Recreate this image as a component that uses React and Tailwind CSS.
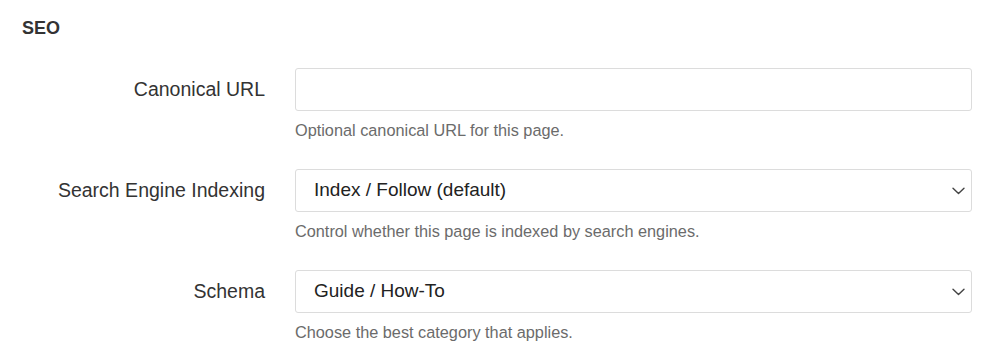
import React from 'react';

const fields = [
  { label: 'Canonical URL', type: 'input', help: 'Optional canonical URL for this page.' },
  { label: 'Search Engine Indexing', type: 'select', value: 'Index / Follow (default)', help: 'Control whether this page is indexed by search engines.' },
  { label: 'Schema', type: 'select', value: 'Guide / How-To', help: 'Choose the best category that applies.' },
];

const Chevron = () => (
  <svg width="13" height="8" viewBox="0 0 13 8" fill="none" className="text-[#444]">
    <polyline points="1,1.2 6.5,6.6 12,1.2" stroke="currentColor" strokeWidth="1.4" strokeLinecap="round" strokeLinejoin="round" />
  </svg>
);

const App = () => {
  return (
    <div className="w-[1000px] h-[360px] bg-white overflow-hidden font-['Liberation_Sans',Arial,sans-serif]">
      <div className="pl-[22px] pt-[17px] text-[18px] font-bold text-[#333] leading-[22px]">SEO</div>

      <div className="mt-[29px] pr-[28px] flex flex-col gap-[29px]">
        {fields.map((f, i) => (
          <div key={i} className="flex">
            <div className="w-[265px] shrink-0 h-[44px] flex items-center justify-end text-[19.5px] text-[#333]">
              {f.label}
            </div>
            <div className="ml-[30px] flex-1">
              {f.type === 'input' ? (
                <div className="h-[43px] border border-[#dcdcdc] rounded-[3px] bg-white" />
              ) : (
                <div className="h-[43px] border border-[#dcdcdc] rounded-[3px] bg-white flex items-center justify-between pl-[18px] pr-[6px]">
                  <span className="text-[19px] text-[#222]">{f.value}</span>
                  <Chevron />
                </div>
              )}
              <div className="mt-[9px] text-[16.3px] text-[#6b6b6b] leading-[20px]">{f.help}</div>
            </div>
          </div>
        ))}
      </div>
    </div>
  );
};

export default App;
